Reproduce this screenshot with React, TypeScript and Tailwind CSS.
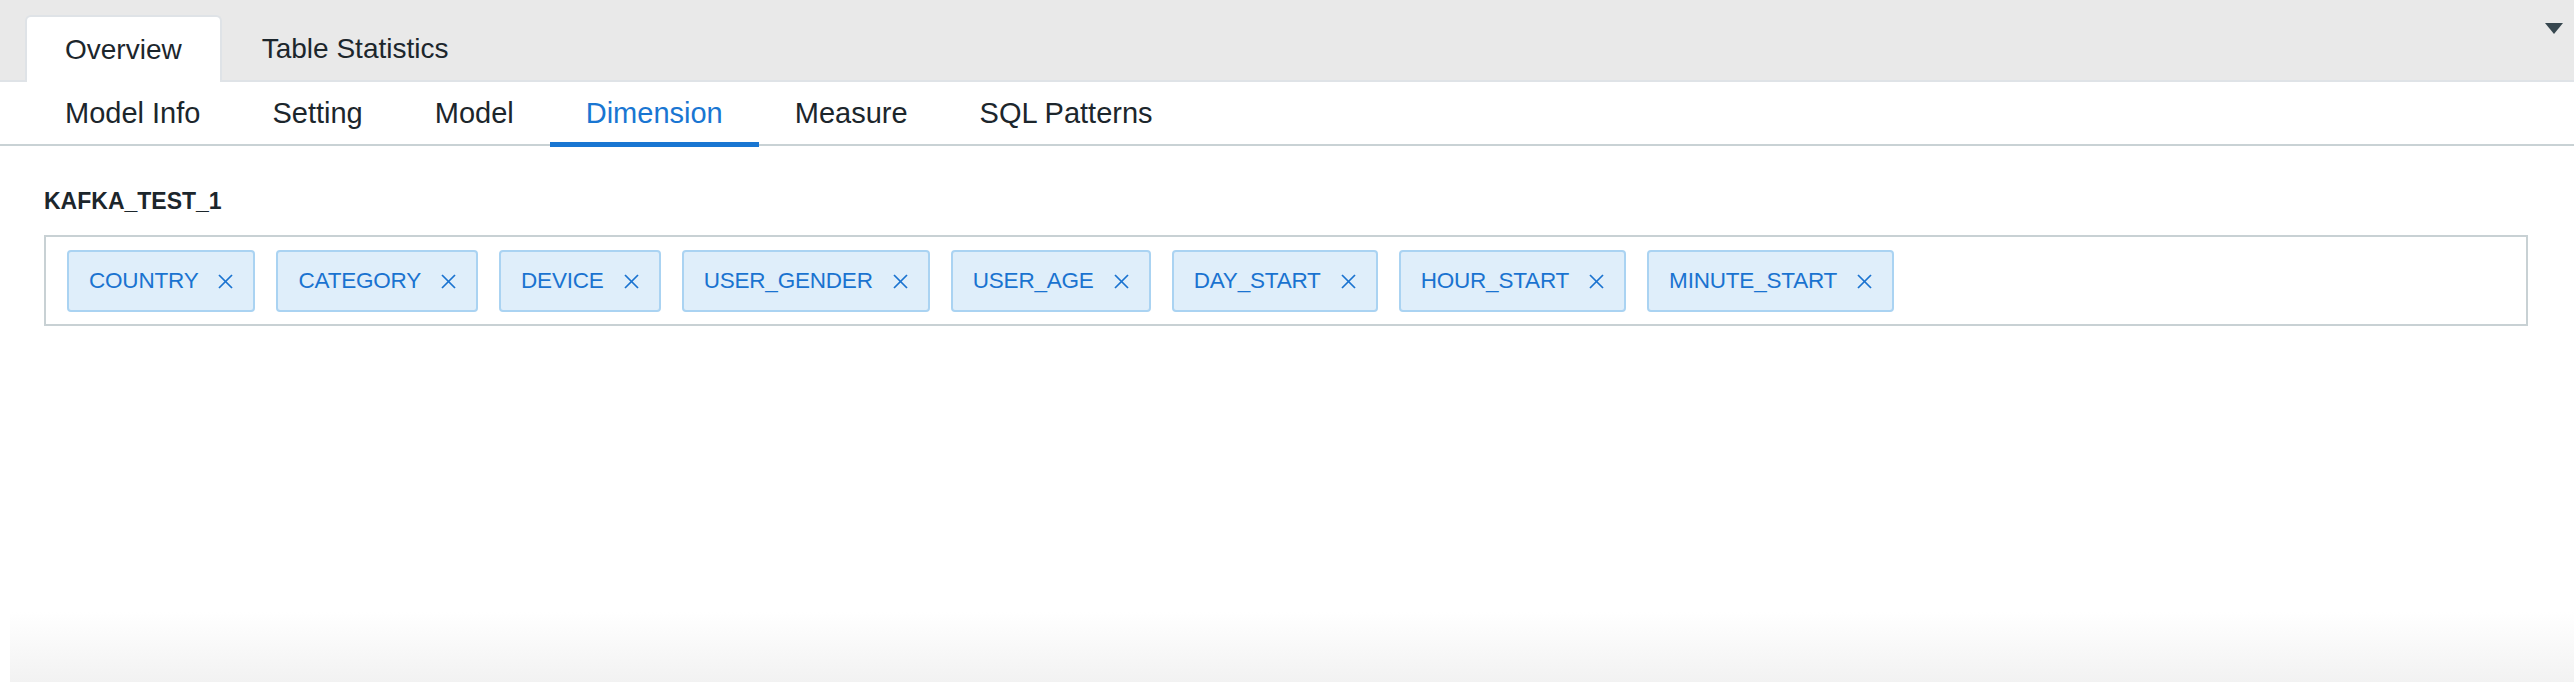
import { useState } from 'react'

const topTabs = ['Overview', 'Table Statistics']
const subTabs = ['Model Info', 'Setting', 'Model', 'Dimension', 'Measure', 'SQL Patterns']
const dimensions = [
  'COUNTRY',
  'CATEGORY',
  'DEVICE',
  'USER_GENDER',
  'USER_AGE',
  'DAY_START',
  'HOUR_START',
  'MINUTE_START',
]

const CloseIcon = () => (
  <svg width="15" height="15" viewBox="0 0 15 15" fill="none" stroke="currentColor" strokeWidth="1.7">
    <line x1="1" y1="1" x2="14" y2="14" />
    <line x1="14" y1="1" x2="1" y2="14" />
  </svg>
)

const App = () => {
  const [topTab, setTopTab] = useState('Overview')
  const [subTab, setSubTab] = useState('Dimension')
  const [tags, setTags] = useState(dimensions)

  return (
    <div className="h-[682px] flex flex-col overflow-hidden bg-white text-[#1c262c] font-['Liberation_Sans',Arial,sans-serif]">
      <div className="flex items-end h-[82px] bg-[#e9e9e9] border-b-2 border-[#dfe3e7]">
        <div className="flex items-end h-full pl-[25px]">
          {topTabs.map((t) => (
            <button
              key={t}
              onClick={() => setTopTab(t)}
              className={
                'h-[67px] -mb-[2px] px-[38px] text-[28px] leading-none rounded-t-[6px] ' +
                (topTab === t ? 'bg-white border-2 border-b-0 border-[#dfe3e7]' : 'border-2 border-transparent')
              }
            >
              {t}
            </button>
          ))}
        </div>
        <div className="ml-auto self-start mt-[23px] mr-[11px]">
          <svg width="18" height="11" viewBox="0 0 18 11">
            <polygon points="0,0 18,0 9,11" fill="#37474f" />
          </svg>
        </div>
      </div>

      <div className="flex h-[64px] pl-[29px] border-b-2 border-[#c9d2d5]">
        {subTabs.map((t) => (
          <button
            key={t}
            onClick={() => setSubTab(t)}
            className={
              'px-[36px] -mb-[3px] flex items-center text-[29px] leading-none border-b-[5px] pt-[3px] ' +
              (subTab === t ? 'text-[#1976d2] border-[#1976d2]' : 'border-transparent')
            }
          >
            {t}
          </button>
        ))}
      </div>

      <div className="pl-[44px] pr-[46px] pt-[41px]">
        <div className="text-[23px] leading-[28px] font-bold">KAFKA_TEST_1</div>
        <div className="mt-[20px] border-2 border-[#c8d1d4] pt-[13px] pb-[12px] pl-[21px] pr-[21px] flex flex-wrap gap-[21px]">
          {tags.map((d) => (
            <div
              key={d}
              className="h-[62px] flex items-center gap-[20px] px-[20px] bg-[#dfeefa] border-2 border-[#aad3f2] rounded-[4px] text-[22.5px] tracking-[-0.2px] text-[#1a73d0]"
            >
              <span>{d}</span>
              <button onClick={() => setTags(tags.filter((x) => x !== d))} className="flex items-center">
                <CloseIcon />
              </button>
            </div>
          ))}
        </div>
      </div>

      <div className="flex-1" />
      <div className="h-[70px] ml-[10px] bg-linear-to-b from-white to-[#f2f2f2]" />
    </div>
  )
}

export default App
